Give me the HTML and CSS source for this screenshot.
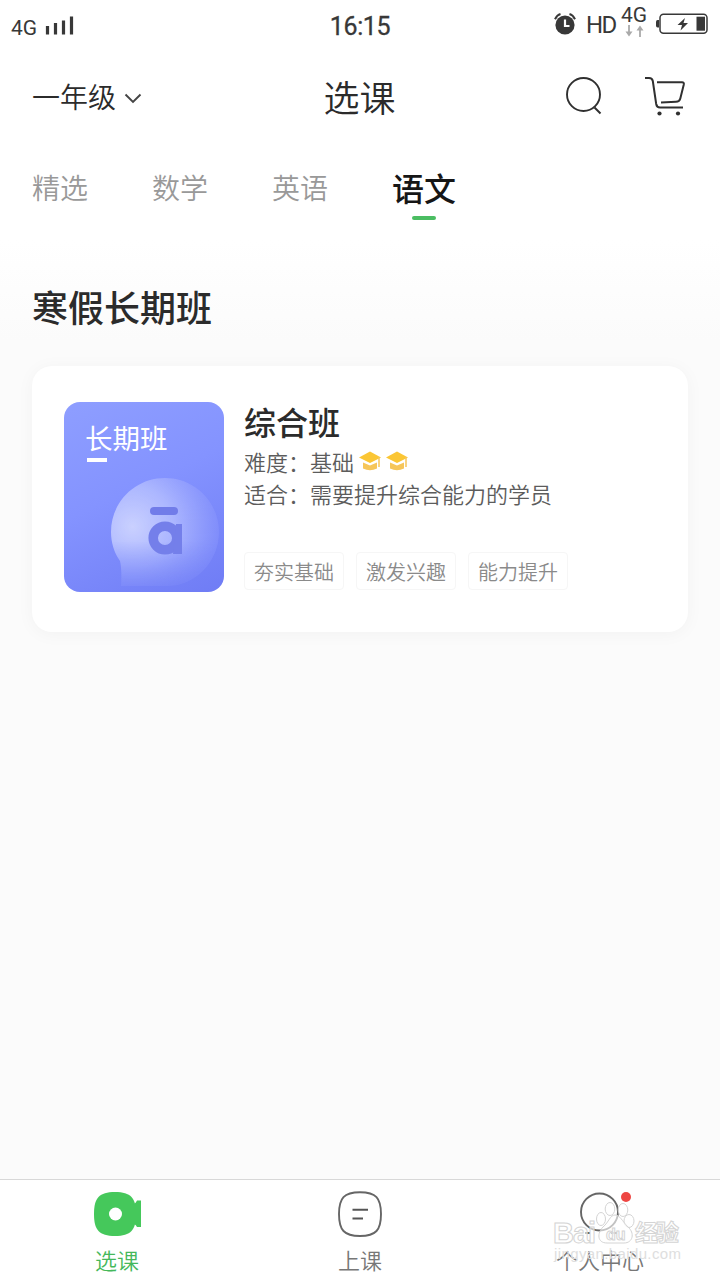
FILE: index.html
```html
<!DOCTYPE html>
<html lang="zh-CN">
<head>
<meta charset="utf-8">
<title>选课</title>
<link rel="stylesheet" href="styles.css">
</head>
<body>
<div class="screen">
  <div class="status">
    <div class="status-left">
      <span class="carrier">4G</span>
      <svg class="signal" width="28" height="19" viewBox="0 0 28 19"><path d="M2.500 18.500V10M10.500 18.500V7M18.500 18.500V4.500M26.500 18.500V0.500" stroke="#383838" stroke-width="3.200"/></svg>
    </div>
    <span class="clock">16:15</span>
    <div class="status-right">
      <svg width="22" height="22" viewBox="0 0 22 22"><circle cx="11" cy="12" r="9.600" fill="#383838"/><path d="M1 6.200Q3 2 6.500 1M21 6.200Q19 2 15.500 1" fill="none" stroke="#383838" stroke-width="2"/><path d="M11 6.500V13H15.500" fill="none" stroke="#fff" stroke-width="2.200"/></svg>
      <span class="hd">HD</span>
      <div class="net">
        <span class="net-label">4G</span>
        <svg width="20" height="12" viewBox="0 0 20 12"><path d="M4 0V8M15 12V4" stroke="#aaa" stroke-width="1.800"/><path d="M0.500 6.500H7.500L4 11.500ZM11.500 5.500H18.500L15 0.500Z" fill="#aaa"/></svg>
      </div>
      <svg class="battery" width="52" height="22" viewBox="0 0 52 22"><rect x="4" y="1.200" width="47" height="19" rx="3.500" fill="none" stroke="#383838" stroke-width="1.500"/><path d="M3 7H1.500Q0 7 0 9V12.500Q0 14.500 1.500 14.500H3Z" fill="#383838"/><rect x="40.500" y="3.700" width="8.500" height="14" fill="#383838"/><path d="M29 5L21.500 12H26L24.500 17.500L32 10H27.500Z" fill="#383838"/></svg>
    </div>
  </div>

  <header class="header">
    <div class="grade">
      <span>一年级</span>
      <svg width="18" height="11" viewBox="0 0 18 11"><path d="M1.500 1.500L9 9L16.500 1.500" fill="none" stroke="#444" stroke-width="1.900"/></svg>
    </div>
    <h1 class="title">选课</h1>
    <div class="actions">
      <svg width="37" height="38" viewBox="0 0 37 38"><circle cx="17.500" cy="17.500" r="16.500" fill="none" stroke="#303030" stroke-width="1.900"/><path d="M28.500 30.500L34.500 36.500" stroke="#303030" stroke-width="2"/></svg>
      <svg width="42" height="40" viewBox="0 0 42 40"><path d="M0 2H4Q7.300 2 7.800 5L11.200 28Q11.800 31.500 15 31.500H38M12 6.200H37Q39.300 6.200 38.800 8.500L35.300 22.500Q34.500 25.800 31 25.800L16 26.500" fill="none" stroke="#303030" stroke-width="2"/><circle cx="14.500" cy="37.500" r="2.100" fill="#303030"/><circle cx="33" cy="37.500" r="2.100" fill="#303030"/></svg>
    </div>
  </header>

  <nav class="tabs">
    <span class="tab">精选</span>
    <span class="tab">数学</span>
    <span class="tab">英语</span>
    <span class="tab tab-active">语文</span>
  </nav>

  <main class="content">
    <h2 class="section-title">寒假长期班</h2>
    <article class="card">
      <div class="cover">
        <span class="cover-title">长期班</span>
        <span class="cover-bar"></span>
        <svg class="cover-art" width="160" height="190" viewBox="0 0 160 190">
          <defs>
            <radialGradient id="bubble" cx="0.200" cy="0.450" r="0.850"><stop offset="0" stop-color="#d2d8ff" stop-opacity=".9"/><stop offset=".45" stop-color="#b3bdff" stop-opacity=".85"/><stop offset="1" stop-color="#7f8cfb" stop-opacity=".65"/></radialGradient>
            <linearGradient id="fade" x1="0" y1="0" x2="0" y2="1"><stop offset=".6" stop-color="#fff"/><stop offset="1" stop-color="#fff" stop-opacity=".2"/></linearGradient>
            <mask id="tail"><rect x="40" y="70" width="120" height="115" fill="url(#fade)"/></mask>
          </defs>
          <path d="M101 76C131 76 155 100 155 130S131 184 104 184H57Q58 168 56 159C50 151 47 140 47 130C47 100 71 76 101 76Z" fill="url(#bubble)" mask="url(#tail)"/>
          <rect x="86" y="105" width="28" height="8" rx="4" fill="#717ce9"/>
          <circle cx="101" cy="136" r="11.800" fill="none" stroke="#747fea" stroke-width="9.500"/>
          <path d="M112 122H118V152H109Z" fill="#747fea"/>
        </svg>
      </div>
      <div class="info">
        <h3 class="course">综合班</h3>
        <p class="line">难度：基础
          <svg class="cap" width="22" height="20" viewBox="0 0 22 20"><path d="M0 6.500L11 0.500L22 6.500L11 12Z" fill="#fbc634"/><path d="M4 11.500L11 14.500L18 11.500V17.500Q11 21 4 17.500Z" fill="#f6c65a"/><path d="M20 6V16" stroke="#f6c65a" stroke-width="1.500"/></svg>
          <svg class="cap" width="22" height="20" viewBox="0 0 22 20"><path d="M0 6.500L11 0.500L22 6.500L11 12Z" fill="#fbc634"/><path d="M4 11.500L11 14.500L18 11.500V17.500Q11 21 4 17.500Z" fill="#f6c65a"/><path d="M20 6V16" stroke="#f6c65a" stroke-width="1.500"/></svg>
        </p>
        <p class="line">适合：需要提升综合能力的学员</p>
        <div class="tags"><span class="tag">夯实基础</span><span class="tag">激发兴趣</span><span class="tag">能力提升</span></div>
      </div>
    </article>
  </main>

  <footer class="tabbar">
    <div class="item item-active">
      <svg width="50" height="46" viewBox="0 0 50 46"><path d="M23 1C39 1 44 7 44 23S39 45 23 45S2 39 2 23S7 1 23 1Z" fill="#45c85b"/><path d="M38 14Q43 14 45 9.500H49V36H45Q43 32 38 32Z" fill="#45c85b"/><circle cx="23.500" cy="23" r="6.500" fill="#fff"/></svg>
      <span>选课</span>
    </div>
    <div class="item">
      <svg width="46" height="46" viewBox="0 0 46 46"><path d="M23 1.200C39 1.200 44 7 44 23S39 45 23 45S2 39 2 23S7 1.200 23 1.200Z" fill="none" stroke="#666" stroke-width="1.900"/><path d="M15.500 18.700H31M15.500 27.500H26" stroke="#555" stroke-width="2"/></svg>
      <span>上课</span>
    </div>
    <div class="item">
      <svg width="54" height="46" viewBox="0 0 54 46"><circle cx="26.500" cy="21" r="18.500" fill="none" stroke="#666" stroke-width="1.900"/><path d="M12 42H17M38 42H44" stroke="#666" stroke-width="1.900"/><circle cx="53" cy="6" r="5" fill="#ee4643"/></svg>
      <span>个人中心</span>
    </div>
  </footer>

  <svg class="watermark" width="140" height="70" viewBox="0 0 140 70">
    <g fill="#fff" fill-opacity=".6" stroke="#d4d4d4" stroke-width="1">
      <ellipse cx="48" cy="22" rx="4.500" ry="6.500"/><ellipse cx="57" cy="12" rx="4.800" ry="6.500"/><ellipse cx="70" cy="13" rx="4.800" ry="6.500"/><ellipse cx="76" cy="24" rx="5" ry="6.500"/>
      <path d="M62 18C67 18 69 24 75 30C82 36 80 46 71 46H54C44 46 44 36 50 30C56 25 57 18 62 18Z"/>
      <text class="wm-brand" x="0" y="46" textLength="43">Bai</text>
      <text class="wm-du" x="53" y="43">du</text>
      <text class="wm-cn" x="82" y="44" textLength="44">经验</text>
    </g>
    <text class="wm-url" x="1" y="62" textLength="127">jingyan.baidu.com</text>
  </svg>
</div>
</body>
</html>
```
FILE: styles.css
```css
* { box-sizing: border-box; }
body, h1, h2, h3, p { margin: 0; }
body {
  font-family: "Noto Sans CJK SC", sans-serif;
  color: #2b2b2b;
}
svg { display: block; flex: none; overflow: visible; }

.screen {
  position: relative;
  display: flex;
  flex-direction: column;
  width: 720px;
  height: 1280px;
  overflow: hidden;
  background: linear-gradient(#fff 240px, #fbfbfb 340px);
}

.status {
  display: grid;
  grid-template-columns: 1fr auto 1fr;
  height: 50px;
  padding: 0 11px;
  color: #383838;
  font-family: Roboto, sans-serif;
}
.status-left { display: flex; gap: 8px; padding-top: 16px; }
.carrier { font-size: 21px; line-height: 24px; }
.signal { width: 28px; }
.clock { font-size: 25px; line-height: 53px; letter-spacing: -.4px; -webkit-text-stroke: .3px; }
.status-right { display: flex; justify-content: flex-end; padding-top: 13px; }
.hd { margin-left: 10px; font-size: 24px; line-height: 24px; width: 30px; letter-spacing: -1.500px; }
.net { display: flex; flex-direction: column; width: 30px; margin: -7px 0 0 5px; }
.net-label { font-size: 21px; line-height: 19px; }
.net svg { margin-left: 4px; }
.battery { margin-left: 5px; margin-right: 1px; }

.header {
  display: grid;
  grid-template-columns: 1fr auto 1fr;
  align-items: center;
  height: 96px;
  padding: 0 33px 4px 32px;
}
.grade { display: flex; align-items: center; gap: 8px; font-size: 28px; line-height: 40px; font-weight: 350; }
.grade svg { margin-top: 4px; }
.title { font-size: 36px; line-height: 48px; font-weight: 350; }
.actions { display: flex; justify-content: flex-end; align-items: center; gap: 42px; }

.tabs { display: flex; height: 104px; padding: 21px 32px 0; gap: 64px; }
.tab { font-size: 28px; line-height: 40px; font-weight: 350; color: #999; }
.tab-active {
  display: flex;
  flex-direction: column;
  align-items: center;
  gap: 9px;
  font-size: 32px;
  font-weight: 500;
  color: #161616;
}
.tab-active::after { content: ""; width: 24px; height: 4px; border-radius: 2px; background: #4bbd62; }

.content { flex: 1; padding: 31px 32px 0; }
.section-title { font-size: 36px; line-height: 50px; font-weight: 500; }
.card {
  display: flex;
  gap: 20px;
  height: 266px;
  margin-top: 35px;
  padding: 36px 32px;
  border-radius: 20px;
  background: #fff;
  box-shadow: 0 2px 18px rgba(0, 0, 0, .04);
}
.cover {
  position: relative;
  display: flex;
  flex-direction: column;
  flex: none;
  width: 160px;
  height: 190px;
  padding: 18px 21px;
  border-radius: 16px;
  background: linear-gradient(155deg, #8e9eff, #8493ff 45%, #6f7cf5);
  color: #fff;
}
.cover-title { font-size: 27.500px; line-height: 34px; }
.cover-bar { width: 20px; height: 4px; margin: 4px 0 0 2px; background: #fff; }
.cover-art { position: absolute; inset: 0; }
.course { height: 43px; font-size: 32px; line-height: 38px; font-weight: 500; }
.line { display: flex; align-items: center; font-size: 22px; line-height: 32px; font-weight: 350; color: #5c5c5c; white-space: nowrap; }
.line .cap { margin: 0 0 0 5px; }
.tags { display: flex; gap: 12px; margin-top: 43px; }
.tag { width: 100px; height: 38px; border: 1px solid #f6f6f6; border-radius: 4px; text-align: center; font-size: 20px; line-height: 37px; font-weight: 350; color: #8a8a8a; }

.tabbar {
  display: flex;
  justify-content: space-between;
  height: 101px;
  padding: 11px 76px 0;
  border-top: 1px solid #d8d8d8;
  background: #fff;
}
.item { display: flex; flex-direction: column; align-items: center; gap: 7px; width: 88px; font-size: 22px; line-height: 30px; font-weight: 350; color: #777; }
.item:first-child { width: 82px; margin-right: 6px; }
.item-active { color: #45b85b; }

.watermark { position: absolute; left: 553px; top: 1197px; }
.wm-brand { font: bold 29px "Liberation Sans", sans-serif; }
.wm-du { font: bold 16px "Liberation Sans", sans-serif; }
.wm-cn { font: bold 23px "Noto Sans CJK SC", sans-serif; }
.wm-url { font: 15px "Liberation Sans", sans-serif; fill: #dedede; }
```
